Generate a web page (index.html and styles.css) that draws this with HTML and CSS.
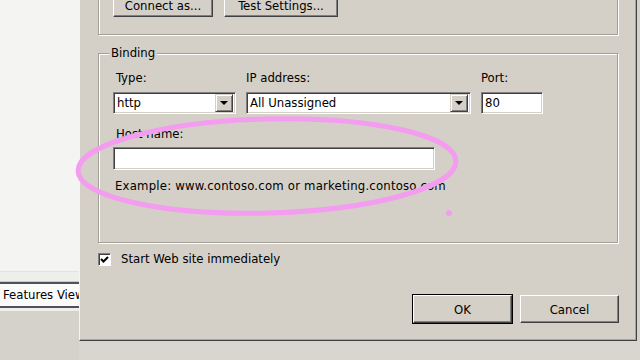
FILE: index.html
```html
<!DOCTYPE html>
<html lang="en">
<head>
    <meta charset="UTF-8">
    <meta name="viewport" content="width=device-width, initial-scale=1.0">
    <title>Add Web Site</title>
    <link rel="stylesheet" href="styles.css">
</head>
<body>
    <div class="screen">
        <div class="side">
            <div class="side-list"></div>
            <div class="side-gap"></div>
            <div class="tab-strip"><span class="tab">Features View</span></div>
            <div class="side-bottom"></div>
        </div>

        <div class="dialog">
            <div class="group group-top">
                <button class="btn btn-connect">Connect as...</button>
                <button class="btn btn-test">Test Settings...</button>
            </div>

            <fieldset class="group binding">
                <legend>Binding</legend>
                <div class="binding-row">
                    <div class="field">
                        <label class="lbl lbl-type">Type:</label>
                        <div class="combo"><span>http</span><i class="drop"></i></div>
                    </div>
                    <div class="field">
                        <label class="lbl">IP address:</label>
                        <div class="combo"><span>All Unassigned</span><i class="drop"></i></div>
                    </div>
                    <div class="field">
                        <label class="lbl">Port:</label>
                        <div class="textbox"><span>80</span></div>
                    </div>
                </div>
                <label class="lbl lbl-host">Host name:</label>
                <div class="textbox host"></div>
                <p class="hint">Example: www.contoso.com or marketing.contoso.com</p>
            </fieldset>

            <label class="check-row">
                <span class="check">
                    <svg width="11" height="11" viewBox="0 0 11 11"><path d="M2 5 L4.5 7.5 L9 3" fill="none" stroke="#000" stroke-width="2"/></svg>
                </span>
                Start Web site immediately
            </label>

            <div class="actions">
                <button class="btn btn-default">OK</button>
                <button class="btn">Cancel</button>
            </div>
        </div>
        <div class="edge"></div>
    </div>

    <!-- pen annotation drawn over the dialog -->
    <svg class="marker" width="640" height="360" viewBox="0 0 640 360">
        <ellipse cx="267" cy="166" rx="189" ry="47" transform="rotate(-1.5 267 166)" fill="none" stroke="#f39cf0" stroke-width="5"/>
        <circle cx="449" cy="213" r="3" fill="#f39cf0"/>
    </svg>
</body>
</html>
```

FILE: styles.css
```css
body {
    margin: 0;
    padding: 0;
    background-color: #d9d6cf;
    font-family: "DejaVu Sans Condensed", "DejaVu Sans", sans-serif;
    font-stretch: condensed;
    font-size: 13px;
    color: #000;
    overflow: hidden;
}
.screen {
    display: flex;
    width: 640px;
    height: 360px;
    position: relative;
}
.side {
    width: 79px;
    flex-shrink: 0;
    display: flex;
    flex-direction: column;
    overflow: hidden;
}
.side-list {
    height: 271px;
    background-color: #f4f5f3;
    border-bottom: 1px solid #e2e2df;
}
.side-gap {
    height: 9px;
    background-color: #eeeeeb;
    border-bottom: 1px solid #c8c8c4;
}
.tab-strip {
    height: 22px;
    background-color: #fbfbfa;
    border-top: 2px solid #4d5260;
    border-bottom: 2px solid #4d5260;
    white-space: nowrap;
}
.tab {
    display: block;
    padding-left: 3px;
    line-height: 22px;
}
.side-bottom {
    flex: 1;
    background-color: #d5d2cb;
    border-top: 3px solid #efeeea;
}
.dialog {
    width: 558px;
    height: 341px;
    flex-shrink: 0;
    box-sizing: border-box;
    background-color: #d4d0c8;
    border-left: 1px solid #f4f4f1;
    border-right: 1px solid #404040;
    border-bottom: 1px solid #404040;
    box-shadow: inset -1px -1px #a8a59e;
    padding: 0 17px 0 18px;
    display: flex;
    flex-direction: column;
    overflow: hidden;
}
.edge {
    flex: 1;
    height: 341px;
    background-color: #d6d3cc;
}
.group {
    border: 1px solid #a29f98;
    box-shadow: inset 1px 1px #fff, 1px 1px #fff;
    width: 520px;
    box-sizing: border-box;
}
.group-top {
    height: 66px;
    flex-shrink: 0;
    margin-top: -31px;
    display: flex;
    align-items: flex-end;
    gap: 11px;
    padding: 0 0 17px 14px;
}
.btn {
    font: inherit;
    color: #000;
    height: 24px;
    background-color: #d4d0c8;
    border: 1px solid;
    border-color: #fff #404040 #404040 #fff;
    box-shadow: inset -1px -1px #808080;
    padding: 0;
}
.btn-connect {
    width: 100px;
}
.btn-test {
    width: 114px;
}
.binding {
    margin: 10px 0 0 0;
    height: 198px;
    flex-shrink: 0;
    padding: 9px 14px 0 14px;
}
.binding legend {
    line-height: 16px;
    padding: 0 2px;
    margin-left: -4px;
    background-color: #d4d0c8;
}
.binding-row {
    display: grid;
    grid-template-columns: 123px 225px 62px;
    column-gap: 10px;
}
.lbl {
    display: block;
    line-height: 16px;
    margin-bottom: 6px;
}
.lbl-type {
    padding-left: 3px;
}
.lbl-host {
    margin-top: 12px;
    margin-bottom: 5px;
    padding-left: 3px;
}
.combo,
.textbox {
    height: 22px;
    box-sizing: border-box;
    background-color: #fff;
    border: 1px solid;
    border-color: #808080 #fff #fff #808080;
    box-shadow: inset 1px 1px #404040, inset -1px -1px #d4d0c8;
    display: flex;
    align-items: center;
    padding: 2px 2px 2px 3px;
}
.combo span,
.textbox span {
    flex: 1;
    line-height: 16px;
}
.drop {
    width: 18px;
    height: 18px;
    box-sizing: border-box;
    background-color: #d4d0c8;
    border: 1px solid;
    border-color: #d4d0c8 #404040 #404040 #d4d0c8;
    box-shadow: inset 1px 1px #fff, inset -1px -1px #808080;
    position: relative;
}
.drop::after {
    content: "";
    position: absolute;
    left: 4px;
    top: 6px;
    border-left: 4px solid transparent;
    border-right: 4px solid transparent;
    border-top: 4px solid #000;
}
.host {
    width: 322px;
    height: 23px;
}
.hint {
    margin: 8px 0 0 2px;
    line-height: 16px;
    letter-spacing: 0.2px;
}
.check-row {
    display: flex;
    align-items: center;
    gap: 10px;
    margin-top: 8px;
    line-height: 16px;
}
.check {
    width: 13px;
    height: 13px;
    box-sizing: border-box;
    background-color: #fff;
    border: 1px solid;
    border-color: #808080 #fff #fff #808080;
    box-shadow: inset 1px 1px #404040;
    display: flex;
    align-items: center;
    justify-content: center;
}
.check svg {
    display: block;
}
.actions {
    margin-top: auto;
    margin-bottom: 17px;
    width: 521px;
    display: flex;
    justify-content: flex-end;
    gap: 8px;
}
.actions .btn {
    width: 99px;
    height: 28px;
}
.btn-default {
    outline: 1px solid #000;
    outline-offset: 0;
    border-color: #fff #404040 #404040 #fff;
}
.marker {
    position: absolute;
    left: 0;
    top: 0;
    pointer-events: none;
}
```
